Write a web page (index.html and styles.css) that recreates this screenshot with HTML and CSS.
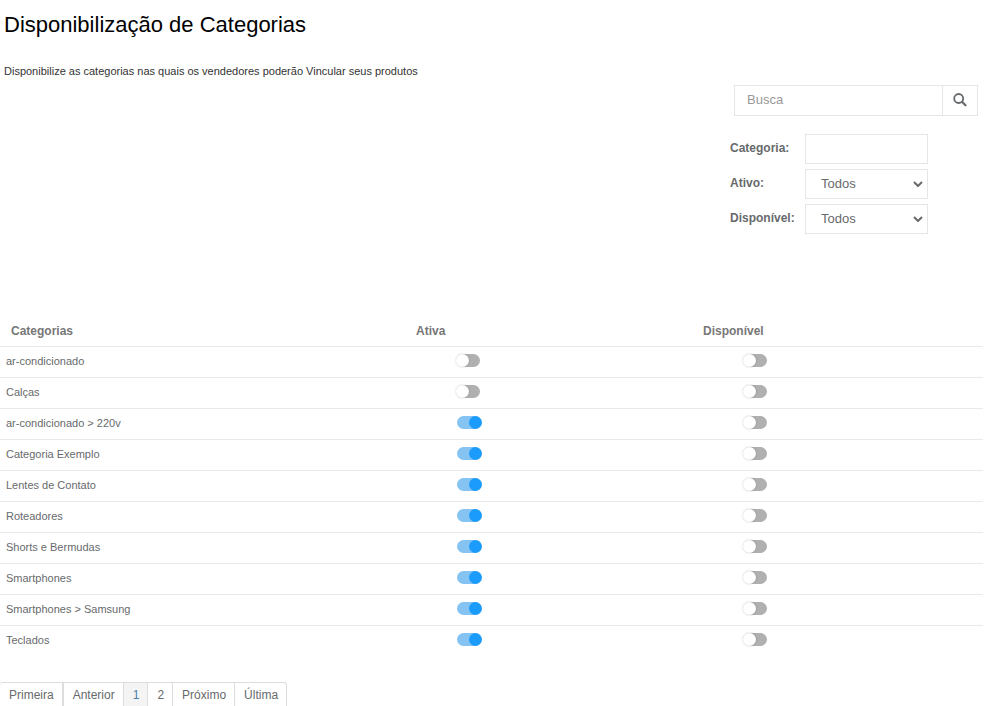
FILE: index.html
```
<!DOCTYPE html>
<html lang="pt-BR">
<head>
  <meta charset="utf-8">
  <meta name="viewport" content="width=device-width, initial-scale=1">
  <title>Disponibilização de Categorias</title>
  <link rel="stylesheet" href="styles.css">
</head>
<body>
  <header class="page-header">
    <h1>Disponibilização de Categorias</h1>
    <p>Disponibilize as categorias nas quais os vendedores poderão Vincular seus produtos</p>
  </header>

  <form class="filters">
    <div class="search">
      <input type="text" class="search-input" placeholder="Busca" aria-label="Busca">
      <button type="button" class="search-btn" aria-label="Buscar">
        <svg width="14" height="14" viewBox="0 0 14 14" fill="none" stroke="currentColor">
          <circle cx="5.7" cy="5.5" r="4.5" stroke-width="1.8"/>
          <path d="M9.2 9l3.3 3.3" stroke-width="2.2" stroke-linecap="round"/>
        </svg>
      </button>
    </div>
    <div class="fields">
      <label for="categoria">Categoria:</label>
      <input type="text" id="categoria" class="field">
      <label for="ativo">Ativo:</label>
      <div class="select-wrap">
        <select id="ativo" class="field"><option>Todos</option><option>Sim</option><option>Não</option></select>
        <svg class="chevron" width="10" height="6" viewBox="0 0 10 6"><path d="M1 1l4 4 4-4" fill="none" stroke="currentColor" stroke-width="2"/></svg>
      </div>
      <label for="disponivel">Disponível:</label>
      <div class="select-wrap">
        <select id="disponivel" class="field"><option>Todos</option><option>Sim</option><option>Não</option></select>
        <svg class="chevron" width="10" height="6" viewBox="0 0 10 6"><path d="M1 1l4 4 4-4" fill="none" stroke="currentColor" stroke-width="2"/></svg>
      </div>
    </div>
  </form>

  <table class="categories">
    <colgroup><col class="col-name"><col class="col-active"><col></colgroup>
    <thead>
      <tr><th>Categorias</th><th>Ativa</th><th>Disponível</th></tr>
    </thead>
    <tbody>
      <tr><td>ar-condicionado</td><td><input type="checkbox" class="switch" aria-label="Ativa: ar-condicionado"></td><td><input type="checkbox" class="switch" aria-label="Disponível: ar-condicionado"></td></tr>
      <tr><td>Calças</td><td><input type="checkbox" class="switch" aria-label="Ativa: Calças"></td><td><input type="checkbox" class="switch" aria-label="Disponível: Calças"></td></tr>
      <tr><td>ar-condicionado &gt; 220v</td><td><input type="checkbox" class="switch" checked aria-label="Ativa: ar-condicionado 220v"></td><td><input type="checkbox" class="switch" aria-label="Disponível: ar-condicionado 220v"></td></tr>
      <tr><td>Categoria Exemplo</td><td><input type="checkbox" class="switch" checked aria-label="Ativa: Categoria Exemplo"></td><td><input type="checkbox" class="switch" aria-label="Disponível: Categoria Exemplo"></td></tr>
      <tr><td>Lentes de Contato</td><td><input type="checkbox" class="switch" checked aria-label="Ativa: Lentes de Contato"></td><td><input type="checkbox" class="switch" aria-label="Disponível: Lentes de Contato"></td></tr>
      <tr><td>Roteadores</td><td><input type="checkbox" class="switch" checked aria-label="Ativa: Roteadores"></td><td><input type="checkbox" class="switch" aria-label="Disponível: Roteadores"></td></tr>
      <tr><td>Shorts e Bermudas</td><td><input type="checkbox" class="switch" checked aria-label="Ativa: Shorts e Bermudas"></td><td><input type="checkbox" class="switch" aria-label="Disponível: Shorts e Bermudas"></td></tr>
      <tr><td>Smartphones</td><td><input type="checkbox" class="switch" checked aria-label="Ativa: Smartphones"></td><td><input type="checkbox" class="switch" aria-label="Disponível: Smartphones"></td></tr>
      <tr><td>Smartphones &gt; Samsung</td><td><input type="checkbox" class="switch" checked aria-label="Ativa: Smartphones Samsung"></td><td><input type="checkbox" class="switch" aria-label="Disponível: Smartphones Samsung"></td></tr>
      <tr><td>Teclados</td><td><input type="checkbox" class="switch" checked aria-label="Ativa: Teclados"></td><td><input type="checkbox" class="switch" aria-label="Disponível: Teclados"></td></tr>
    </tbody>
  </table>

  <nav class="pagination" aria-label="Paginação">
    <a href="#" class="first">Primeira</a>
    <a href="#">Anterior</a>
    <a href="#" class="active" aria-current="page">1</a>
    <a href="#">2</a>
    <a href="#">Próximo</a>
    <a href="#">Última</a>
  </nav>
</body>
</html>
```

FILE: styles.css
```
* {
  box-sizing: border-box;
}
body {
  margin: 0;
  background: #fff;
  color: #676a6c;
  font-family: "Liberation Sans", Arial, sans-serif;
  font-size: 12px;
}
.page-header {
  padding: 10px 4px 0;
}
.page-header h1 {
  margin: 0 0 24px;
  color: #000;
  font-size: 22px;
  font-weight: 400;
  line-height: 30px;
}
.page-header p {
  margin: 0;
  color: #333;
  font-size: 11px;
  line-height: 14px;
}

/* filters */
.filters {
  width: 248px;
  margin: 7px 7px 0 auto;
}
.search {
  display: flex;
  margin-left: 4px;
}
.search-input,
.search-btn,
.field {
  border: 1px solid #e5e6e7;
  border-radius: 0;
  background: #fff;
  color: #676a6c;
  font-family: inherit;
  font-size: 13px;
}
.search-input {
  flex: 1;
  min-width: 0;
  height: 31px;
  padding: 0 12px 2px;
}
.search-input::placeholder {
  color: #999;
}
.search-btn {
  display: flex;
  align-items: center;
  justify-content: center;
  width: 35px;
  padding: 0 0 2px;
  border-left: 0;
}
.fields {
  display: grid;
  grid-template-columns: 75px 123px;
  gap: 5px 0;
  margin-top: 18px;
}
.fields label {
  padding-top: 6px;
  font-weight: 700;
  line-height: 16px;
}
.field {
  display: block;
  width: 100%;
  height: 30px;
  padding: 0 15px 2px;
}
.select-wrap {
  position: relative;
}
select.field {
  appearance: none;
}
.chevron {
  position: absolute;
  top: 12px;
  right: 5px;
  pointer-events: none;
}

/* table */
.categories {
  width: calc(100% - 2px);
  margin-top: 82px;
  border-collapse: separate;
  border-spacing: 0;
  table-layout: fixed;
}
.col-name {
  width: 41.2%;
}
.col-active {
  width: 29.2%;
}
.categories th {
  height: 30px;
  padding: 0 11px;
  color: #777;
  text-align: left;
}
.categories td {
  height: 31px;
  padding: 0 6px 2px;
  border-top: 1px solid #e7eaec;
  font-size: 11px;
}
.categories td + td {
  padding: 0 0 4px 52px;
}
.switch {
  appearance: none;
  display: block;
  position: relative;
  width: 23px;
  height: 13px;
  margin: 0;
  border-radius: 7px;
  background: #b0b0b0;
}
.switch::before {
  content: "";
  position: absolute;
  top: 0;
  left: -1px;
  width: 13px;
  height: 13px;
  border-radius: 50%;
  background: #fff;
  box-shadow: 0 0 2px rgba(0, 0, 0, 0.25);
}
.switch:checked {
  background: #84c3f2;
}
.switch:checked::before {
  left: 12px;
  background: #1b9bfb;
  box-shadow: none;
}

/* pagination */
.pagination {
  display: flex;
  margin-top: 26px;
}
.pagination a {
  padding: 4px 8px 3px 9px;
  border: 1px solid #ddd;
  border-width: 1px 1px 0 0;
  color: #676a6c;
  line-height: 16px;
  text-decoration: none;
}
.pagination .first {
  border-right-width: 2px;
  border-top-left-radius: 3px;
}
.pagination a:last-child {
  border-top-right-radius: 3px;
}
.pagination .active {
  background: #f4f4f4;
  color: #4a7fa8;
}
```
